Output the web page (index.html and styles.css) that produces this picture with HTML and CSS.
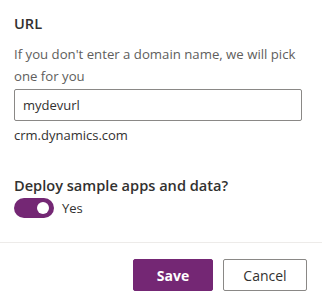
FILE: index.html
```html
<!DOCTYPE html>
<html>
<head>
<meta charset="utf-8">
<link rel="stylesheet" href="styles.css">
</head>
<body>
<div class="panel">
  <div class="content">
    <div class="label">URL</div>
    <div class="desc">If you don't enter a domain name, we will pick one for you</div>
    <div class="input">mydevurl</div>
    <div class="suffix">crm.dynamics.com</div>
    <div class="label deploy">Deploy sample apps and data?</div>
    <div class="toggle-row">
      <span class="toggle"><span class="knob"></span></span>
      <span class="toggle-text">Yes</span>
    </div>
  </div>
  <div class="divider"></div>
  <div class="footer">
    <button class="btn primary">Save</button>
    <button class="btn secondary">Cancel</button>
  </div>
</div>
</body>
</html>
```
FILE: styles.css
```css
html, body {
  margin: 0;
  padding: 0;
  background: #ffffff;
}
body {
  font-family: "Open Sans", "Noto Sans", sans-serif;
  font-size: 13px;
  color: #323130;
}
.panel {
  width: 322px;
}
.content {
  padding: 13px 20px 0 14px;
  display: flex;
  flex-direction: column;
}
.label {
  font-size: 14.6px;
  font-weight: 600;
  line-height: 20px;
  color: #323130;
}
.desc {
  margin-top: 10px;
  line-height: 22px;
  font-size: 13.2px;
  color: #605e5c;
}
.input {
  margin-top: 2px;
  height: 32px;
  box-sizing: border-box;
  border: 1px solid #8a8886;
  border-radius: 2px;
  padding: 0 8px;
  line-height: 30px;
  color: #323130;
}
.suffix {
  margin-top: 4px;
  line-height: 20px;
  color: #323130;
}
.deploy {
  margin-top: 30px;
}
.toggle-row {
  margin-top: 3px;
  display: flex;
  align-items: center;
  gap: 8px;
}
.toggle {
  width: 40px;
  height: 20px;
  border-radius: 10px;
  background: #742774;
  display: flex;
  align-items: center;
  justify-content: flex-end;
  padding: 0 5px;
  box-sizing: border-box;
}
.knob {
  width: 12px;
  height: 12px;
  border-radius: 50%;
  background: #ffffff;
}
.toggle-text {
  line-height: 20px;
  color: #323130;
}
.divider {
  margin-top: 24px;
  height: 1px;
  background: #edebe9;
}
.footer {
  padding: 16px 15px 0 0;
  display: flex;
  justify-content: flex-end;
  gap: 10px;
}
.btn {
  height: 32px;
  box-sizing: border-box;
  border-radius: 2px;
  font-family: inherit;
  font-size: 14px;
  font-weight: 700;
  padding: 0;
  cursor: pointer;
}
.primary {
  width: 80px;
  background: #742774;
  border: 1px solid #742774;
  color: #ffffff;
}
.secondary {
  width: 84px;
  background: #ffffff;
  border: 1px solid #8a8886;
  color: #323130;
  font-weight: 400;
}
```
